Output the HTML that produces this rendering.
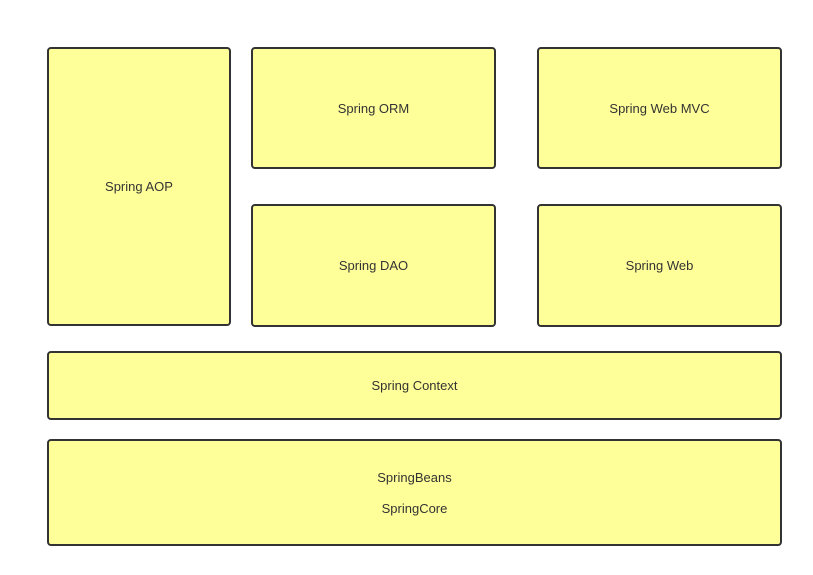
<!DOCTYPE html>
<html><head><style>
body{margin:0;width:813px;height:575px;background:#fff;position:relative;overflow:hidden;font-family:"Liberation Sans",sans-serif;font-size:13px;color:#333}
.b{position:absolute;box-sizing:border-box;border:2px solid #333;border-radius:4px;background:#ffff99;display:flex;align-items:center;justify-content:center;flex-direction:column;text-align:center}
</style></head><body>
<div class="b" style="left:47px;top:47px;width:184px;height:279px">Spring AOP</div>
<div class="b" style="left:251px;top:47px;width:245px;height:122px">Spring ORM</div>
<div class="b" style="left:537px;top:47px;width:245px;height:122px">Spring Web MVC</div>
<div class="b" style="left:251px;top:204px;width:245px;height:123px">Spring DAO</div>
<div class="b" style="left:537px;top:204px;width:245px;height:123px">Spring Web</div>
<div class="b" style="left:47px;top:351px;width:735px;height:69px">Spring Context</div>
<div class="b" style="left:47px;top:439px;width:735px;height:107px"><div style="margin-bottom:16px">SpringBeans</div><div>SpringCore</div></div>
</body></html>
